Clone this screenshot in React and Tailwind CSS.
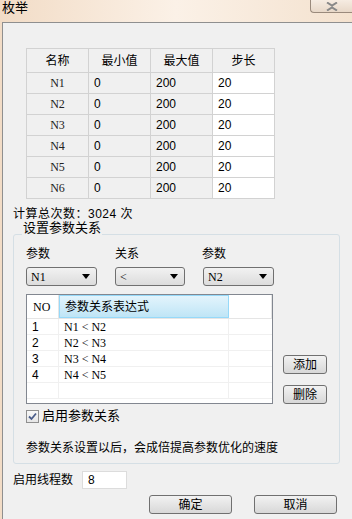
import React from "react";

const params = ["N1", "N2", "N3", "N4", "N5", "N6"];
const relations = [
  ["1", "N1 < N2"],
  ["2", "N2 < N3"],
  ["3", "N3 < N4"],
  ["4", "N4 < N5"],
];

const Combo = ({ value, width }) => (
  <div
    className={`${width} h-[19px] flex items-center justify-between px-[4px] rounded-[3px] border border-[#707070] bg-gradient-to-b from-[#f2f2f2] to-[#dcdcdc]`}
  >
    <span className="font-['Liberation_Serif','Noto_Sans_CJK_SC',serif] text-[12px] leading-none">
      {value}
    </span>
    <svg width="8" height="5" viewBox="0 0 8 5" className="mr-[2px]">
      <path d="M0 0 H8 L4 5 Z" fill="#000" />
    </svg>
  </div>
);

const Btn = ({ label, width }) => (
  <button
    className={`${width} h-[19px] flex items-center justify-center rounded-[3px] border border-[#707070] bg-gradient-to-b from-[#f2f2f2] to-[#d8d8d8] text-[12px] leading-none text-black`}
  >
    {label}
  </button>
);

export default function App() {
  return (
    <div className="w-[352px] h-[519px] overflow-hidden bg-gradient-to-r from-[#f2dcc6] via-[#fbf1e7] to-[#f4e2cf] font-['Liberation_Sans','Noto_Sans_CJK_SC',sans-serif] text-[12px] text-black">
      {/* title bar */}
      <div className="h-[22px] flex justify-between">
        <span className="ml-[2px] mt-[1px] text-[13px] leading-[14px]">枚举</span>
        <div className="w-[42px] h-[13px] flex items-center justify-center rounded-bl-[4px] border-l border-b border-[#9a8a7c] bg-gradient-to-b from-[#f6ece2] to-[#e8d8c8]">
          <svg width="14" height="9" viewBox="0 0 14 9">
            <path
              d="M2 0.5 L7 3.5 L12 0.5 M2 8.5 L7 5.5 L12 8.5"
              stroke="#888"
              strokeWidth="2"
              fill="none"
            />
          </svg>
        </div>
      </div>

      {/* window body */}
      <div className="ml-[2px] h-[497px] border-l border-t border-[#8f8f8f] bg-[#f0f0f0]">
        {/* param table */}
        <table className="ml-[23px] mt-[25px] border-collapse border border-[#d2d2d2] text-[12px]">
          <thead>
            <tr className="h-[24px]">
              {["名称", "最小值", "最大值", "步长"].map((h) => (
                <th
                  key={h}
                  className="w-[62px] p-0 border border-[#d2d2d2] font-normal text-center"
                >
                  {h}
                </th>
              ))}
            </tr>
          </thead>
          <tbody>
            {params.map((p) => (
              <tr key={p} className="h-[21px]">
                <td className="p-0 border border-[#d2d2d2] text-center font-['Liberation_Serif',serif] text-[12px] text-[#222]">
                  {p}
                </td>
                <td className="p-0 pl-[5px] border border-[#d2d2d2]">0</td>
                <td className="p-0 pl-[5px] border border-[#d2d2d2]">200</td>
                <td className="p-0 pl-[5px] border border-[#d2d2d2] bg-white">20</td>
              </tr>
            ))}
          </tbody>
        </table>

        <div className="ml-[10px] mt-[8px] h-[14px] leading-[14px] tracking-[0.5px]">
          计算总次数：3024 次
        </div>

        {/* group box */}
        <fieldset className="ml-[10px] mt-0 w-[326px] h-[243px] border border-[#d5dfe5] rounded-[3px] px-[12px]">
          <legend className="ml-[-4px] px-[1px] pb-[12px] text-[13px] leading-[14px]">设置参数关系</legend>

          <div className="flex h-[14px] leading-[14px]">
            <span className="w-[89px]">参数</span>
            <span className="w-[87px]">关系</span>
            <span>参数</span>
          </div>

          <div className="flex mt-[6px] gap-[18px]">
            <Combo value="N1" width="w-[71px]" />
            <Combo value="<" width="w-[70px]" />
            <Combo value="N2" width="w-[71px]" />
          </div>

          <div className="flex mt-[8px]">
            {/* list view */}
            <div className="w-[247px] h-[110px] border border-[#828790] bg-white">
              <div className="flex h-[24px] border-b border-[#e5e5e5]">
                <div className="w-[32px] flex items-center pl-[6px] font-['Liberation_Serif',serif] text-[12px] border-r border-[#e5e5e5]">
                  NO
                </div>
                <div className="w-[170px] flex items-center pl-[5px] border border-[#96d9f9] bg-gradient-to-b from-[#e3f4fc] to-[#bfe5f6]">
                  参数关系表达式
                </div>
                <div className="flex-1 border-r border-[#e5e5e5]" />
              </div>
              {relations.concat([["", ""]]).map(([n, expr], i) => (
                <div key={i} className="flex h-[16px] border-b border-[#f0f0f0]">
                  <div className="w-[32px] pl-[5px] leading-[16px] border-r border-[#f0f0f0]">{n}</div>
                  <div className="w-[170px] pl-[5px] leading-[16px] border-r border-[#f0f0f0] font-['Liberation_Serif',serif] text-[12px] whitespace-pre">
                    {expr}
                  </div>
                  <div className="flex-1" />
                </div>
              ))}
            </div>

            <div className="ml-[10px] flex flex-col justify-end gap-[11px]">
              <Btn label="添加" width="w-[44px]" />
              <Btn label="删除" width="w-[44px]" />
            </div>
          </div>

          <label className="flex items-center mt-[5px] h-[14px]">
            <span className="w-[13px] h-[13px] flex items-center justify-center border border-[#8f8f8f] bg-gradient-to-b from-[#f8f8f8] to-[#e6e6e6]">
              <svg width="9" height="9" viewBox="0 0 9 9">
                <path d="M1 4.5 L3.5 7 L8 1.5" stroke="#4a5d8a" strokeWidth="1.8" fill="none" />
              </svg>
            </span>
            <span className="ml-[3px] text-[13px]">启用参数关系</span>
          </label>

          <div className="mt-[18px] text-[12px] leading-[14px]">
            参数关系设置以后，会成倍提高参数优化的速度
          </div>
        </fieldset>

        <div className="flex items-center ml-[10px] mt-[7px] h-[18px]">
          <span>启用线程数</span>
          <div className="ml-[9px] w-[45px] h-[18px] border border-[#dcdcdc] bg-white pl-[5px] leading-[16px]">
            8
          </div>
        </div>

        <div className="flex mt-[6px] ml-[146px] gap-[22px]">
          <Btn label="确定" width="w-[83px]" />
          <Btn label="取消" width="w-[83px]" />
        </div>
      </div>
    </div>
  );
}
